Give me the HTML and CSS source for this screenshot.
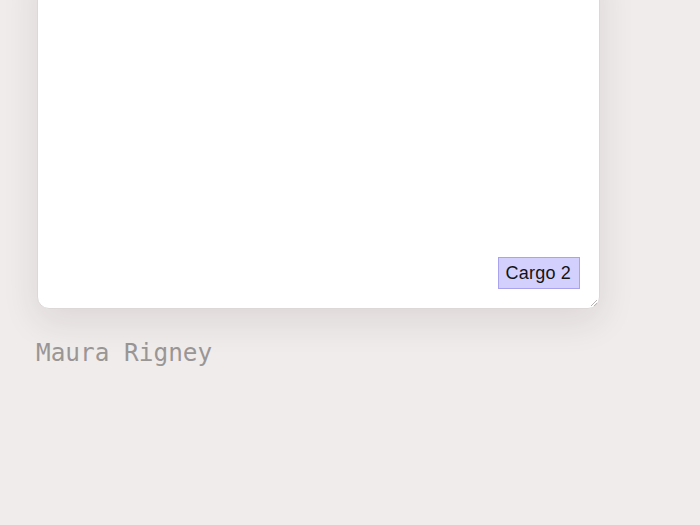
FILE: index.html
```html
<!DOCTYPE html>
<html>
<head>
<meta charset="utf-8">
<link rel="stylesheet" href="styles.css">
</head>
<body>
<div class="page">
  <div class="card">
    <span class="tag">Cargo 2</span>
    <svg class="grip" width="8" height="8" viewBox="0 0 8 8"><path d="M7 1 L1 7 M7 4 L4 7" stroke="#b8b4b4" stroke-width="1" fill="none"/></svg>
  </div>
  <div class="name">Maura Rigney</div>
</div>
</body>
</html>
```
FILE: styles.css
```css
html, body {
  margin: 0;
  padding: 0;
  background: #f0ecec;
  height: 100%;
}
.page {
  padding-left: 37px;
  width: 563px;
}
.card {
  position: relative;
  margin-top: -40px;
  height: 349px;
  box-sizing: border-box;
  background: #fff;
  border: 1px solid #dcd8d8;
  border-radius: 12px;
  box-shadow: 0 12px 36px rgba(60, 40, 40, 0.11);
  display: flex;
  justify-content: flex-end;
  align-items: flex-end;
  padding: 0 18px 19px 0;
}
.tag {
  font-family: "Liberation Sans", Arial, sans-serif;
  font-size: 18px;
  line-height: 20px;
  color: #141414;
  background: #d4d0fd;
  border: 1px solid #a9a2ee;
  padding: 5px 8px 5px 7px;
  margin-right: 1px;
  letter-spacing: 0.2px;
}
.grip {
  position: absolute;
  right: 1px;
  bottom: 1px;
}
.name {
  margin-top: 30px;
  margin-left: -1px;
  font-family: "DejaVu Sans Mono", monospace;
  font-size: 24.4px;
  line-height: 28px;
  color: #9a9696;
}
```
